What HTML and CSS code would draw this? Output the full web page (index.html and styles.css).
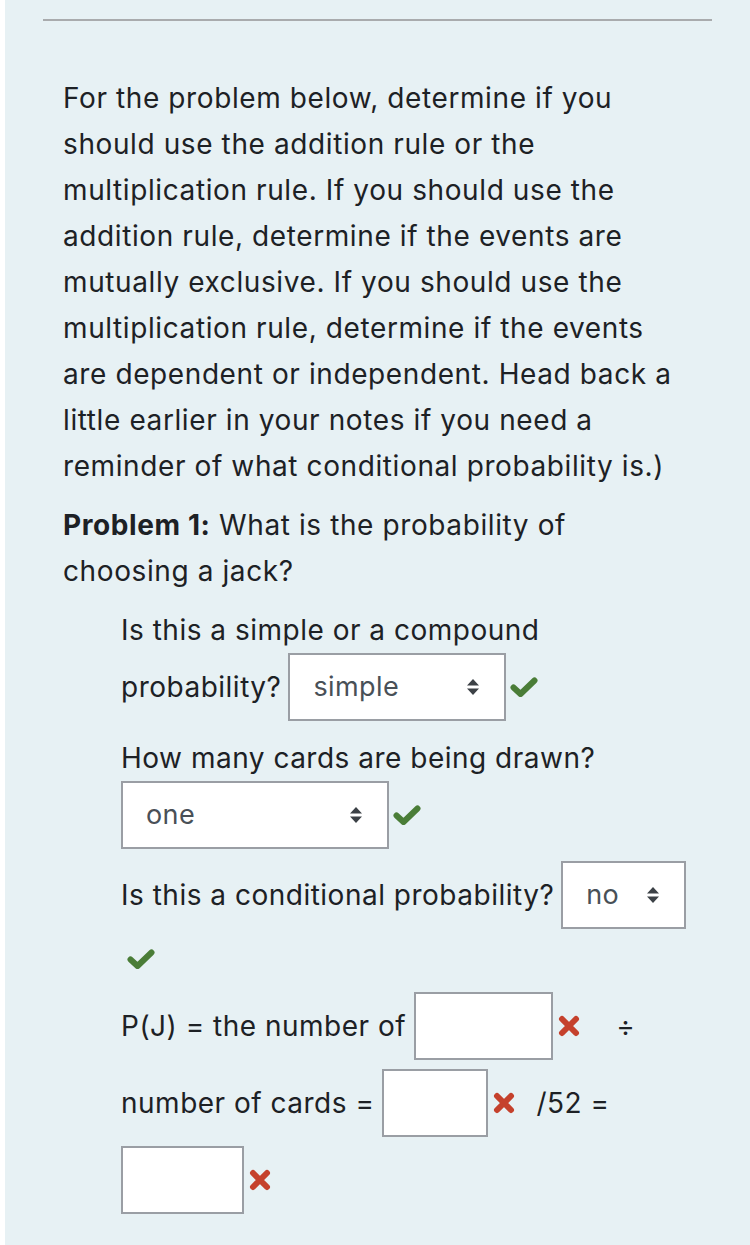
FILE: index.html
```html
<!DOCTYPE html>
<html lang="en">
<head>
<meta charset="utf-8">
<title>Problem</title>
<link rel="stylesheet" href="styles.css">
</head>
<body>
<div class="panel">
  <hr class="rule">
  <div class="content">
    <p class="intro">For the problem below, determine if you<br>should use the addition rule or the<br>multiplication rule. If you should use the<br>addition rule, determine if the events are<br>mutually exclusive. If you should use the<br>multiplication rule, determine if the events<br>are dependent or independent. Head back a<br>little earlier in your notes if you need a<br>reminder of what conditional probability is.)</p>
    <p class="problem"><strong>Problem 1:</strong> What is the probability of<br>choosing a jack?</p>

    <div class="questions">
      <div class="q q-first">
        <div class="line">Is this a simple or a compound</div>
        <div class="line tall">probability?
          <span class="select sel-simple"><span>simple</span><svg class="arrows" viewBox="0 0 12 16"><path d="M6 0 L12 6.5 H0 Z M6 16 L12 9.5 H0 Z"/></svg></span><svg class="check" viewBox="0 0 28 20"><path d="M3.5 10.5 L10.5 17 L24.5 3.5"/></svg>
        </div>
      </div>

      <div class="q">
        <div class="line">How many cards are being drawn?</div>
        <div class="line tall">
          <span class="select sel-one"><span>one</span><svg class="arrows" viewBox="0 0 12 16"><path d="M6 0 L12 6.5 H0 Z M6 16 L12 9.5 H0 Z"/></svg></span><svg class="check" viewBox="0 0 28 20"><path d="M3.5 10.5 L10.5 17 L24.5 3.5"/></svg>
        </div>
      </div>

      <div class="q q-cond">
        <div class="line tall">Is this a conditional probability?
          <span class="select sel-no"><span>no</span><svg class="arrows" viewBox="0 0 12 16"><path d="M6 0 L12 6.5 H0 Z M6 16 L12 9.5 H0 Z"/></svg></span>
        </div>
        <div class="line feedback"><svg class="check" viewBox="0 0 28 20"><path d="M3.5 10.5 L10.5 17 L24.5 3.5"/></svg></div>
      </div>

      <div class="calc">
        <div class="row">P(J) = the number of <span class="input in-a"></span><svg class="cross" viewBox="0 0 22 22"><path d="M4 4 L18 18 M18 4 L4 18"/></svg><span class="div">÷</span></div>
        <div class="row">number of cards = <span class="input in-b"></span><svg class="cross" viewBox="0 0 22 22"><path d="M4 4 L18 18 M18 4 L4 18"/></svg><span class="over">/52 =</span></div>
        <div class="row"><span class="input in-c"></span><svg class="cross" viewBox="0 0 22 22"><path d="M4 4 L18 18 M18 4 L4 18"/></svg></div>
      </div>
    </div>
  </div>
</div>
</body>
</html>
```

FILE: styles.css
```css
html, body {
  margin: 0;
  padding: 0;
  background: #ffffff;
}

body {
  font-family: Inter, "Liberation Sans", Arial, sans-serif;
  color: #1d2125;
  font-size: 28px;
  letter-spacing: 0.6px;
  line-height: 46px;
}

.panel {
  margin-left: 5px;
  min-height: 1245px;
  background: #e7f1f4;
  padding: 19px 38px 0 38px;
  box-sizing: border-box;
}

.rule {
  margin: 0;
  border: 0;
  height: 2px;
  background: #a9abad;
}

.content {
  padding-left: 20px;
}

.intro {
  margin: 54px 0 13px;
}

.problem {
  margin: 0 0 13px;
}

.problem strong {
  font-weight: 700;
}

.questions {
  padding-left: 58px;
  letter-spacing: 0.5px;
}

.q {
  margin-bottom: 14px;
}

.line {
  display: flex;
  align-items: center;
  height: 46px;
  white-space: nowrap;
}

.line.tall {
  height: 68px;
}

.q-cond {
  margin-bottom: 0;
}

.q-cond .line.tall {
  margin-top: -2px;
}

.line.feedback {
  height: 59px;
  padding-left: 2px;
  margin-bottom: 4px;
}

.select {
  display: inline-flex;
  align-items: center;
  justify-content: space-between;
  box-sizing: border-box;
  height: 68px;
  background: #ffffff;
  border: 2px solid #9a9ea4;
  color: #495057;
  font-size: 27px;
  letter-spacing: 0.4px;
  padding: 0 25px 0 23px;
}

.line .select {
  margin-left: 7px;
}

.sel-simple { width: 218px; }
.sel-one { width: 268px; margin-left: 0 !important; }
.sel-no { width: 125px; }

.arrows {
  width: 12px;
  height: 16px;
  fill: #3c4146;
}

.check {
  width: 28px;
  height: 20px;
  margin-left: 4px;
  fill: none;
  stroke: #4a7d37;
  stroke-width: 6;
  stroke-linecap: round;
  stroke-linejoin: round;
}

.calc {
  display: flex;
  flex-direction: column;
  gap: 9px;
}

.row {
  display: flex;
  align-items: center;
  height: 68px;
  white-space: nowrap;
}

.input {
  display: inline-block;
  box-sizing: border-box;
  height: 68px;
  background: #ffffff;
  border: 2px solid #9a9ea4;
  margin-left: 8px;
}

.in-a { width: 139px; }
.in-b { width: 106px; }
.in-c { width: 123px; margin-left: 0; }

.cross {
  width: 22px;
  height: 22px;
  margin-left: 5px;
  fill: none;
  stroke: #c5412c;
  stroke-width: 6;
  stroke-linecap: round;
}

.div {
  margin-left: 36px;
}

.over {
  margin-left: 21px;
}
```
